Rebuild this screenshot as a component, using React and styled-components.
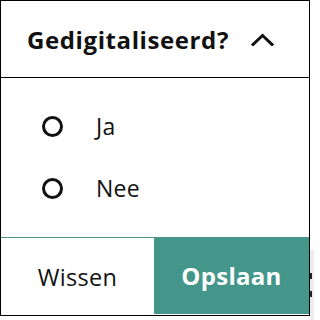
import React, { useState } from "react";
import styled, { createGlobalStyle } from "styled-components";

const GlobalStyle = createGlobalStyle`
  html, body {
    margin: 0;
    padding: 0;
    background: #fff;
  }
  body {
    font-family: "Open Sans", Lato, sans-serif;
    color: #111;
  }
`;

const Page = styled.div`
  display: flex;
  align-items: flex-start;
`;

const Panel = styled.div`
  width: 310px;
  box-sizing: border-box;
  border: 1px solid #000;
  background: #fff;
  display: flex;
  flex-direction: column;
`;

const Sliver = styled.div`
  width: 4px;
  height: 70px;
  margin-top: 250px;
  background: #ececec;
  display: flex;
  flex-direction: column;
  justify-content: center;
  gap: 12px;

  span {
    display: block;
    width: 3px;
    height: 6px;
    border-left: 2px solid #222;
  }
`;

const Header = styled.button`
  display: flex;
  align-items: center;
  gap: 22px;
  height: 77px;
  padding: 0 0 0 26px;
  border: none;
  border-bottom: 1px solid #000;
  background: transparent;
  font-family: inherit;
  font-size: 24px;
  font-weight: 700;
  letter-spacing: 0.6px;
  color: #111;
  cursor: pointer;
  text-align: left;
`;

const Options = styled.div`
  display: flex;
  flex-direction: column;
  padding: 17px 0 18px 41px;
`;

const Option = styled.label`
  display: flex;
  align-items: center;
  gap: 33px;
  height: 62px;
  font-size: 23px;
  font-weight: 500;
  letter-spacing: 0.3px;
  color: #111;
  cursor: pointer;
`;

const Circle = styled.span`
  width: 21px;
  height: 21px;
  box-sizing: border-box;
  border-radius: 50%;
  border: 3px solid #111;
  display: flex;
  align-items: center;
  justify-content: center;

  &::after {
    content: "";
    width: 9px;
    height: 9px;
    border-radius: 50%;
    background: ${(p) => (p.$checked ? "#111" : "transparent")};
  }
`;

const Footer = styled.div`
  display: grid;
  grid-template-columns: 153px 1fr;
  border-top: 1px solid #44968b;
`;

const FooterButton = styled.button`
  height: 77px;
  margin-top: ${(p) => (p.$primary ? "-1px" : "0")};
  border: none;
  background: ${(p) => (p.$primary ? "#44968b" : "#fff")};
  color: ${(p) => (p.$primary ? "#fff" : "#111")};
  font-family: inherit;
  font-size: ${(p) => (p.$primary ? "24px" : "23.5px")};
  font-weight: ${(p) => (p.$primary ? 700 : 500)};
  letter-spacing: 0.3px;
  cursor: pointer;
`;

function Chevron() {
  return (
    <svg width="23" height="13" viewBox="0 0 23 13" fill="none">
      <path
        d="M2 11.5L11.5 2.5L21 11.5"
        stroke="#111"
        strokeWidth="3"
        strokeLinecap="square"
      />
    </svg>
  );
}

export default function App() {
  const [value, setValue] = useState(null);
  const options = ["Ja", "Nee"];

  return (
    <Page>
      <GlobalStyle />
      <Panel>
        <Header>
          <span>Gedigitaliseerd?</span>
          <Chevron />
        </Header>
        <Options>
          {options.map((opt) => (
            <Option key={opt} onClick={() => setValue(opt)}>
              <Circle $checked={value === opt} />
              {opt}
            </Option>
          ))}
        </Options>
        <Footer>
          <FooterButton onClick={() => setValue(null)}>Wissen</FooterButton>
          <FooterButton $primary>Opslaan</FooterButton>
        </Footer>
      </Panel>
      <Sliver>
        <span />
        <span />
      </Sliver>
    </Page>
  );
}
